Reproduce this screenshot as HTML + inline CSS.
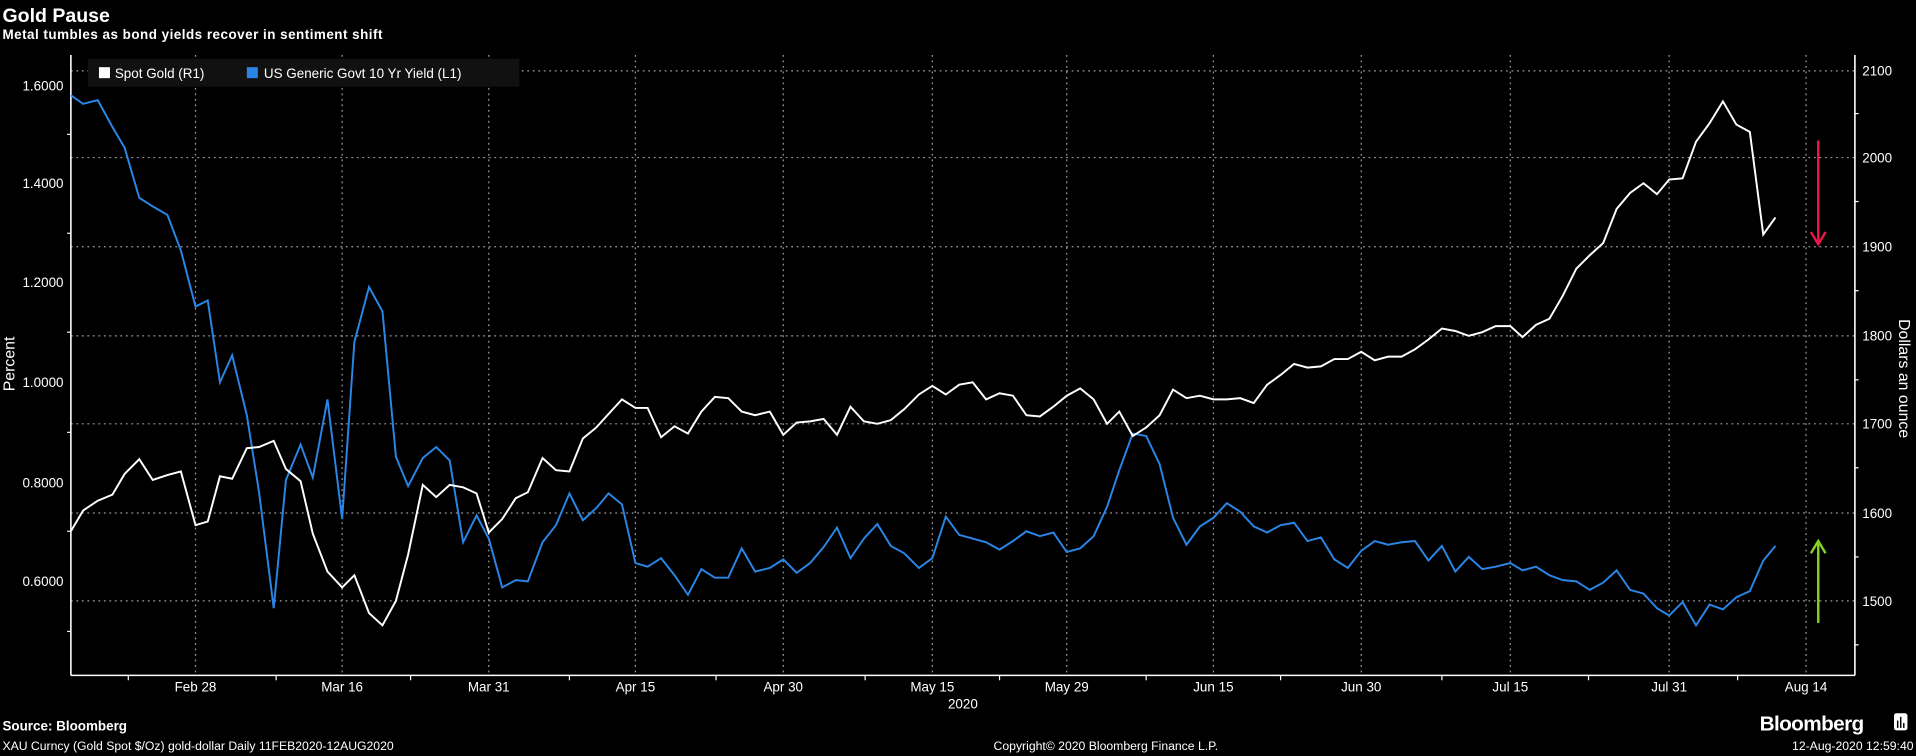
<!DOCTYPE html>
<html><head><meta charset="utf-8"><style>
html,body{margin:0;padding:0;background:#000;width:1916px;height:756px;overflow:hidden}
svg{display:block}
text{font-family:"Liberation Sans",sans-serif;fill:#fff}
</style></head><body>
<svg width="1916" height="756" viewBox="0 0 1568 619" preserveAspectRatio="none" xmlns="http://www.w3.org/2000/svg">
<rect width="1568" height="619" fill="#000"/>
<text x="2" y="18" font-size="16" font-weight="bold">Gold Pause</text>
<text x="2" y="32" font-size="11" font-weight="bold" letter-spacing="0.4">Metal tumbles as bond yields recover in sentiment shift</text>
<g stroke="#999" stroke-width="1" stroke-dasharray="1.5,3">
<line x1="58" x2="1518" y1="58" y2="58"/><line x1="58" x2="1518" y1="129" y2="129"/><line x1="58" x2="1518" y1="202" y2="202"/><line x1="58" x2="1518" y1="275" y2="275"/><line x1="58" x2="1518" y1="347" y2="347"/><line x1="58" x2="1518" y1="420" y2="420"/><line x1="58" x2="1518" y1="492" y2="492"/>
<line x1="160" x2="160" y1="45" y2="553"/><line x1="280" x2="280" y1="45" y2="553"/><line x1="400" x2="400" y1="45" y2="553"/><line x1="520" x2="520" y1="45" y2="553"/><line x1="641" x2="641" y1="45" y2="553"/><line x1="763" x2="763" y1="45" y2="553"/><line x1="873" x2="873" y1="45" y2="553"/><line x1="993" x2="993" y1="45" y2="553"/><line x1="1114" x2="1114" y1="45" y2="553"/><line x1="1236" x2="1236" y1="45" y2="553"/><line x1="1366" x2="1366" y1="45" y2="553"/><line x1="1478" x2="1478" y1="45" y2="553"/>
</g>
<g stroke="#fff" stroke-width="1.3">
<line x1="58" x2="58" y1="45" y2="553"/><line x1="1518" x2="1518" y1="45" y2="553"/><line x1="58" x2="1518" y1="553" y2="553"/>
</g>
<g stroke="#fff" stroke-width="1">
<line x1="55" x2="58" y1="110" y2="110"/><line x1="55" x2="58" y1="191" y2="191"/><line x1="55" x2="58" y1="272" y2="272"/><line x1="55" x2="58" y1="354" y2="354"/><line x1="55" x2="58" y1="435" y2="435"/><line x1="55" x2="58" y1="517" y2="517"/>
<line x1="1518" x2="1521" y1="93" y2="93"/><line x1="1518" x2="1521" y1="165" y2="165"/><line x1="1518" x2="1521" y1="238" y2="238"/><line x1="1518" x2="1521" y1="311" y2="311"/><line x1="1518" x2="1521" y1="383" y2="383"/><line x1="1518" x2="1521" y1="456" y2="456"/><line x1="1518" x2="1521" y1="528" y2="528"/>
<line x1="105" x2="105" y1="553" y2="557"/><line x1="226" x2="226" y1="553" y2="557"/><line x1="336" x2="336" y1="553" y2="557"/><line x1="466" x2="466" y1="553" y2="557"/><line x1="586" x2="586" y1="553" y2="557"/><line x1="708" x2="708" y1="553" y2="557"/><line x1="818" x2="818" y1="553" y2="557"/><line x1="938" x2="938" y1="553" y2="557"/><line x1="1048" x2="1048" y1="553" y2="557"/><line x1="1180" x2="1180" y1="553" y2="557"/><line x1="1300" x2="1300" y1="553" y2="557"/><line x1="1422" x2="1422" y1="553" y2="557"/>
</g>
<rect x="72" y="48" width="353" height="23" fill="#111"/>
<rect x="81" y="55" width="9" height="9" fill="#fff"/>
<text x="94" y="64" font-size="11">Spot Gold (R1)</text>
<rect x="202" y="55" width="9" height="9" fill="#2a86e6"/>
<text x="216" y="64" font-size="11">US Generic Govt 10 Yr Yield (L1)</text>
<g font-size="11" text-anchor="end">
<text x="52" y="74">1.6000</text><text x="52" y="154">1.4000</text><text x="52" y="235">1.2000</text><text x="52" y="317">1.0000</text><text x="52" y="399">0.8000</text><text x="52" y="480">0.6000</text>
</g>
<g font-size="11">
<text x="1524" y="62">2100</text><text x="1524" y="133">2000</text><text x="1524" y="206">1900</text><text x="1524" y="279">1800</text><text x="1524" y="351">1700</text><text x="1524" y="424">1600</text><text x="1524" y="496">1500</text>
</g>
<g font-size="11" text-anchor="middle">
<text x="160" y="566">Feb 28</text><text x="280" y="566">Mar 16</text><text x="400" y="566">Mar 31</text><text x="520" y="566">Apr 15</text><text x="641" y="566">Apr 30</text><text x="763" y="566">May 15</text><text x="873" y="566">May 29</text><text x="993" y="566">Jun 15</text><text x="1114" y="566">Jun 30</text><text x="1236" y="566">Jul 15</text><text x="1366" y="566">Jul 31</text><text x="1478" y="566">Aug 14</text>
<text x="788" y="580">2020</text>
</g>
<text transform="translate(12,298) rotate(-90)" font-size="13" text-anchor="middle">Percent</text>
<text transform="translate(1554,310) rotate(90)" font-size="13" text-anchor="middle">Dollars an ounce</text>
<polyline fill="none" stroke="#2a86e6" stroke-width="1.6" points="58,78 68,85 80,82 92,104 102,121 114,162 125,169 137,176 148,205 160,251 170,246 180,313 190,291 202,340 212,403 224,498 234,393 246,364 256,391 268,327 280,425 290,280 302,235 313,255 324,374 334,398 346,375 357,366 368,377 379,444 390,422 400,441 411,481 422,475 432,476 444,444 455,430 466,404 477,426 488,416 498,404 509,413 520,461 530,464 541,457 552,471 563,487 574,466 585,473 596,473 607,449 618,468 630,465 641,458 652,469 663,461 674,448 685,432 696,457 707,441 718,429 729,447 740,453 752,465 763,457 774,423 785,438 796,441 807,444 818,450 829,443 840,435 851,439 862,436 873,452 884,449 895,439 906,415 916,385 927,355 938,357 949,380 960,424 971,446 982,431 993,424 1004,412 1015,419 1026,431 1037,436 1048,430 1059,428 1070,443 1081,440 1092,458 1103,465 1114,451 1125,443 1136,446 1147,444 1158,443 1169,459 1180,447 1191,468 1202,456 1213,466 1224,464 1236,461 1246,467 1257,464 1268,471 1279,475 1290,476 1301,483 1312,477 1323,467 1334,483 1345,486 1356,498 1366,504 1377,493 1388,512 1399,495 1410,499 1421,489 1432,484 1443,459 1453,447"/>
<polyline fill="none" stroke="#fff" stroke-width="1.6" points="58,435 68,418 80,410 92,405 102,388 114,376 125,393 137,389 148,386 160,430 170,427 180,390 190,392 202,367 212,366 224,361 234,384 246,394 256,437 268,468 280,481 290,471 302,502 313,512 324,492 334,454 346,397 357,407 368,397 379,399 390,404 400,436 411,425 422,408 432,403 444,375 455,385 466,386 477,359 488,350 498,339 509,327 520,334 530,334 541,358 552,349 563,355 574,337 585,325 596,326 607,337 618,340 630,337 641,356 652,346 663,345 674,343 685,356 696,333 707,345 718,347 729,344 740,335 752,323 763,316 774,323 785,315 796,313 807,327 818,322 829,324 840,340 851,341 862,333 873,324 884,318 895,327 906,347 916,337 927,357 938,350 949,340 960,319 971,326 982,324 993,327 1004,327 1015,326 1026,330 1037,315 1048,307 1059,298 1070,301 1081,300 1092,294 1103,294 1114,288 1125,295 1136,292 1147,292 1158,286 1169,278 1180,269 1191,271 1202,275 1213,272 1224,267 1236,267 1246,276 1257,266 1268,261 1279,242 1290,220 1301,209 1312,199 1323,171 1334,158 1345,150 1356,159 1366,147 1377,146 1388,116 1399,101 1410,83 1421,102 1432,108 1443,192 1453,178"/>
<g stroke="#e8194a" stroke-width="2" fill="none"><line x1="1488" y1="115" x2="1488" y2="200"/><polyline points="1482,190 1488,200 1494,190"/></g>
<g stroke="#86d11b" stroke-width="2" fill="none"><line x1="1488" y1="510" x2="1488" y2="443"/><polyline points="1482,453 1488,443 1494,453"/></g>
<text x="2" y="598" font-size="11" font-weight="bold">Source: Bloomberg</text>
<text x="1440" y="598" font-size="17" font-weight="bold" letter-spacing="-0.5">Bloomberg</text>
<rect x="1550" y="584" width="11" height="14" rx="2" fill="#fff"/>
<g stroke="#000" stroke-width="1.2"><line x1="1553" y1="590" x2="1553" y2="596"/><line x1="1555.5" y1="587" x2="1555.5" y2="596"/><line x1="1558" y1="592" x2="1558" y2="596"/></g>
<text x="2" y="614" font-size="10">XAU Curncy (Gold Spot  $/Oz) gold-dollar  Daily 11FEB2020-12AUG2020</text>
<text x="905" y="614" font-size="10" text-anchor="middle">Copyright© 2020 Bloomberg Finance L.P.</text>
<text x="1566" y="614" font-size="10" text-anchor="end">12-Aug-2020 12:59:40</text>
</svg>
</body></html>
